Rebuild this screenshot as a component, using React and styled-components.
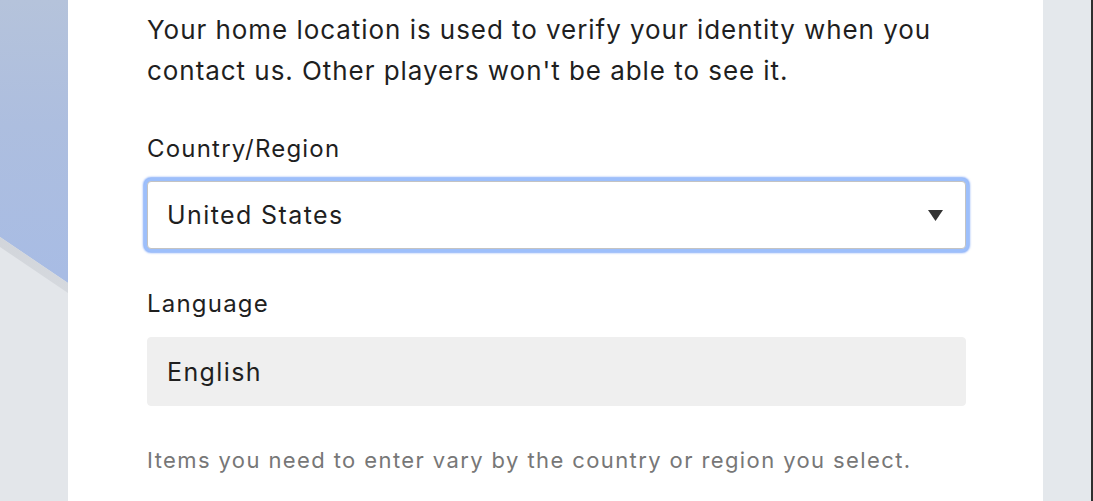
import styled, { createGlobalStyle } from 'styled-components';

const GlobalStyle = createGlobalStyle`
  html, body {
    margin: 0;
    padding: 0;
    background: #ffffff;
  }
  body {
    font-family: Inter, "Liberation Sans", Arial, sans-serif;
    -webkit-font-smoothing: antialiased;
  }
`;

const Page = styled.div`
  display: flex;
  width: 1093px;
  height: 501px;
  overflow: hidden;
`;

const Backdrop = styled.div`
  position: relative;
  width: 68px;
  flex-shrink: 0;
  background-color: #e3e6ea;

  &::before {
    content: '';
    position: absolute;
    inset: 0;
    background: linear-gradient(to bottom, #b5c3db 0%, #adbedf 25%, #a8bce4 55%);
    clip-path: polygon(0 0, 100% 0, 100% 283px, 0 237px);
  }

  &::after {
    content: '';
    position: absolute;
    inset: 0;
    background: linear-gradient(to bottom, #c2c6cd, #e3e6ea);
    clip-path: polygon(0 237px, 100% 283px, 100% 293px, 0 247px);
  }
`;

const Panel = styled.main`
  flex: 1;
  background: #ffffff;
  padding: 9px 77px 0 79px;
  color: #1f1f1f;
`;

const Intro = styled.p`
  margin: 0;
  font-size: 26px;
  line-height: 41px;
  letter-spacing: 0.95px;
  white-space: nowrap;
`;

const Label = styled.div`
  margin-top: ${(props) => props.gap}px;
  font-size: 24px;
  line-height: 28px;
  letter-spacing: 1.2px;
`;

const Field = styled.div`
  display: flex;
  align-items: center;
  justify-content: space-between;
  box-sizing: border-box;
  margin-top: ${(props) => props.gap}px;
  height: ${(props) => props.tall}px;
  padding: 0 22px 0 19px;
  font-size: 25px;
  letter-spacing: 1.4px;
  border-radius: 4px;
  background: ${(props) => (props.disabled ? '#efefef' : '#ffffff')};
  border: 1px solid ${(props) => (props.disabled ? '#efefef' : '#c3c3c3')};
  box-shadow: ${(props) =>
    props.focused
      ? '0 0 0 3px #9dbffb, 0 0 2px 4px rgba(104, 152, 246, 0.8)'
      : 'none'};
`;

const Caret = styled.svg`
  width: 15px;
  height: 11px;
  fill: #333333;
`;

const Hint = styled.p`
  margin: 41px 0 0;
  font-size: 22px;
  line-height: 26px;
  letter-spacing: 1.4px;
  color: #777777;
  white-space: nowrap;
`;

const SideStrip = styled.div`
  width: 48px;
  flex-shrink: 0;
  background: #e4e8ec;
`;

const WindowEdge = styled.div`
  width: 2px;
  flex-shrink: 0;
  background: #2f2f2f;
`;

export default function App() {
  return (
    <>
      <GlobalStyle />
      <Page>
        <Backdrop />
        <Panel>
          <Intro>
            Your home location is used to verify your identity when you
            <br />
            contact us. Other players won't be able to see it.
          </Intro>
          <Label gap={44}>Country/Region</Label>
          <Field gap={18} tall={68} focused>
            <span>United States</span>
            <Caret viewBox="0 0 15 11">
              <path d="M0 0h15L7.5 11z" />
            </Caret>
          </Field>
          <Label gap={41}>Language</Label>
          <Field gap={19} tall={69} disabled>
            <span>English</span>
          </Field>
          <Hint>Items you need to enter vary by the country or region you select.</Hint>
        </Panel>
        <SideStrip />
        <WindowEdge />
      </Page>
    </>
  );
}
